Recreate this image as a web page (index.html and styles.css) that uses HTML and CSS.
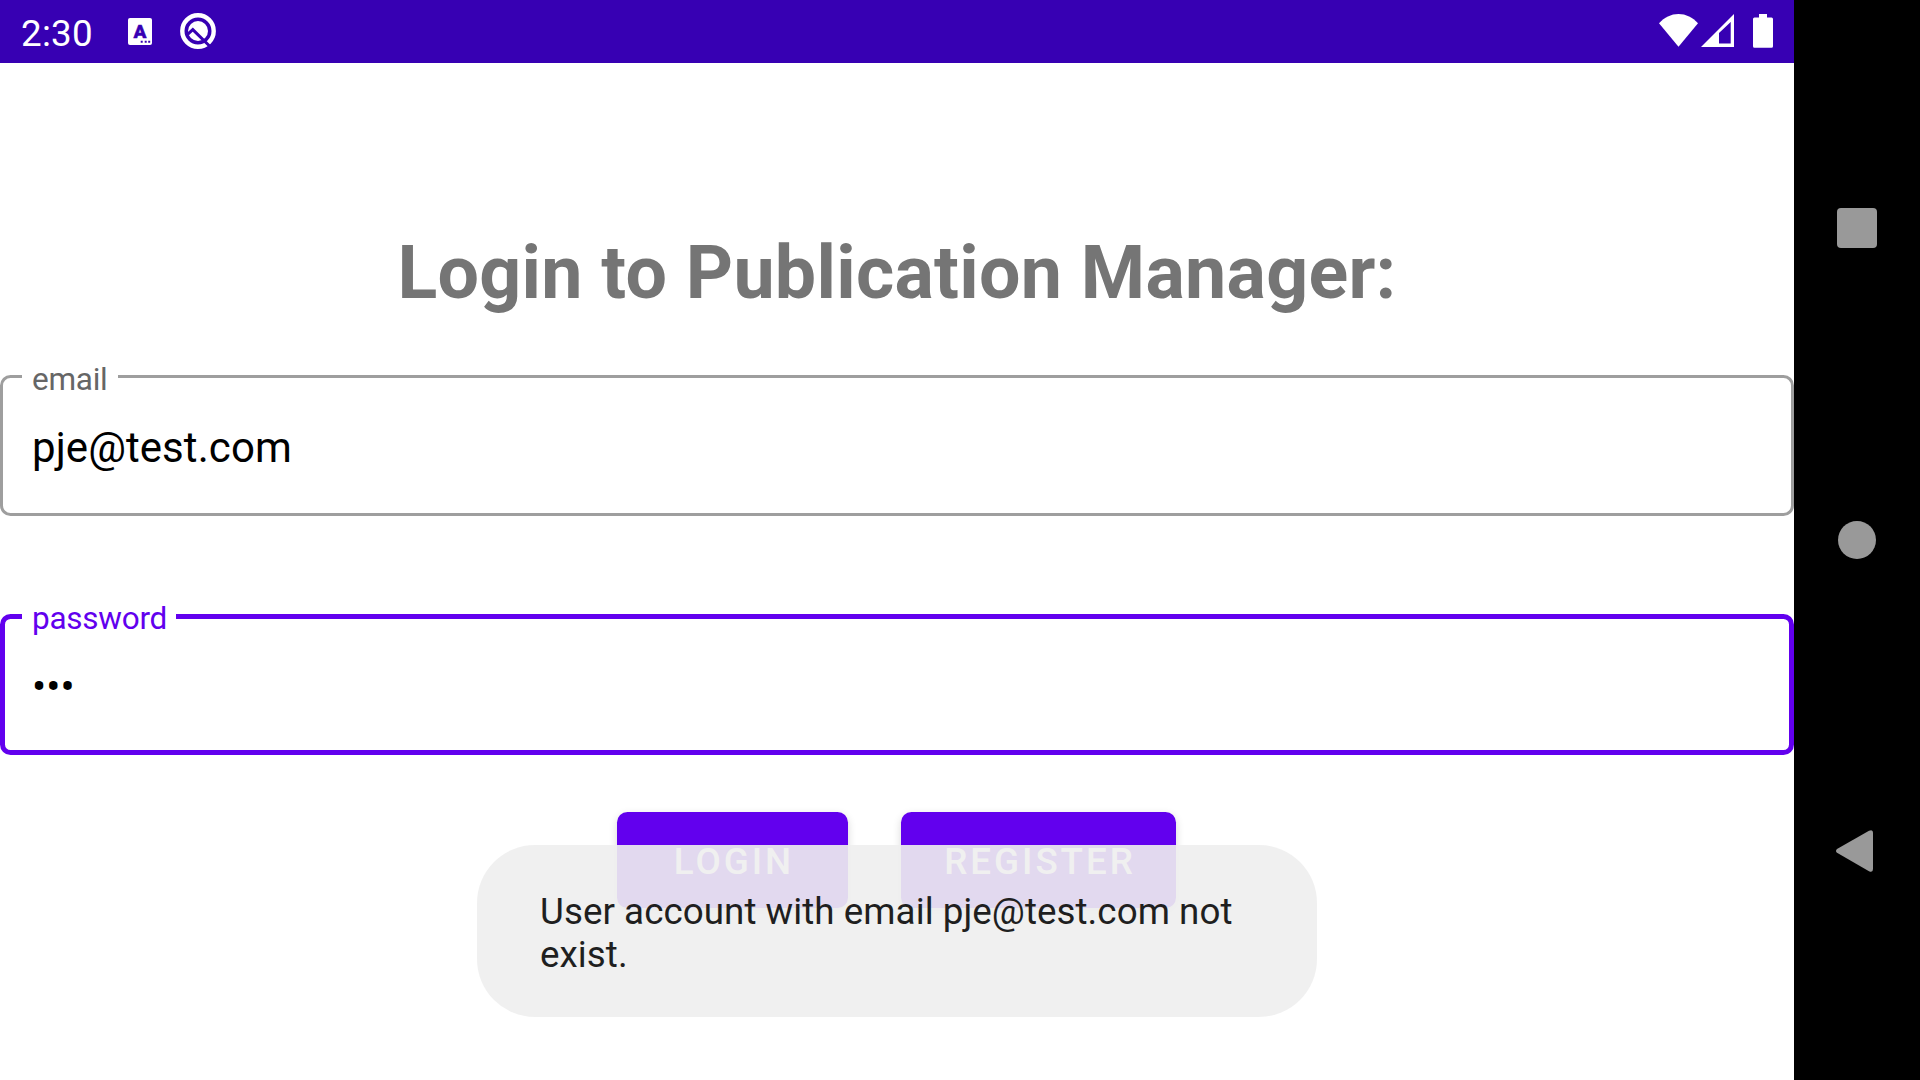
FILE: index.html
```html
<!DOCTYPE html>
<html lang="en">
<head>
<meta charset="utf-8">
<title>Publication Manager</title>
<link rel="stylesheet" href="styles.css">
</head>
<body>
<div class="app">
  <header class="status">
    <span class="clock">2:30</span>
    <svg class="ico-lang" width="24" height="27" viewBox="0 0 24 27">
      <rect width="24" height="27" rx="2" fill="#fff"/>
      <text class="lang-letter" x="12" y="19.5" text-anchor="middle">A</text>
      <path d="M12.7 23.700h2M16.700 23.700h2M20.200 23.700h2" stroke="#3700b3" stroke-width="2"/>
    </svg>
    <svg class="ico-ring" width="36" height="36" viewBox="0 0 36 36">
      <circle cx="18" cy="18" r="15.700" fill="none" stroke="#fff" stroke-width="4.400"/>
      <circle cx="18" cy="18" r="10" fill="#fff"/>
      <path d="M7 21.800L12.800 16.600L29.500 33" fill="none" stroke="#3700b3" stroke-width="3"/>
    </svg>
    <svg class="ico-wifi" width="39" height="33" viewBox="0 0 39 33">
      <path d="M19.5 32.7L0 9.2C5.4 3.400 12 0 19.500 0S33.600 3.400 39 9.200Z" fill="#fff"/>
    </svg>
    <svg class="ico-signal" width="33" height="33" viewBox="0 0 33 33">
      <path fill-rule="evenodd" d="M0 33L33 0V33ZM18 19V29.500H29.700V8Z" fill="#fff"/>
    </svg>
    <svg class="ico-battery" width="20" height="34" viewBox="0 0 20 34">
      <path d="M6 0H14V3.500H18.500Q20 3.500 20 5V32.300Q20 33.800 18.500 33.800H1.500Q0 33.800 0 32.300V5Q0 3.500 1.500 3.500H6Z" fill="#fff"/>
    </svg>
  </header>
  <main class="login">
    <h1 class="title">Login to Publication Manager:</h1>
    <div class="field">
      <span class="label">email</span>
      <span class="value">pje@test.com</span>
    </div>
    <div class="field focused">
      <span class="label">password</span>
      <span class="value">•••</span>
    </div>
    <div class="actions">
      <button class="btn btn-login">LOGIN</button>
      <button class="btn btn-register">REGISTER</button>
    </div>
  </main>
  <div class="toast">User account with email pje@test.com not exist.</div>
</div>
<nav class="nav">
  <div class="nav-item"><svg width="40" height="40" viewBox="0 0 40 40"><rect width="40" height="40" rx="4" fill="#999"/></svg></div>
  <div class="nav-item"><svg width="40" height="40" viewBox="0 0 40 40"><circle cx="20" cy="20" r="19" fill="#999"/></svg></div>
  <div class="nav-item"><svg width="42" height="44" viewBox="0 0 42 44"><path d="M1 19L33 .8Q37 -1 37 2.800V39Q37 43 33 41.200L1 22.800Q-1 20.900 1 19Z" fill="#999"/></svg></div>
</nav>
</body>
</html>
```
FILE: styles.css
```css
* { box-sizing: border-box; }

body {
  margin: 0;
  width: 1920px;
  height: 1080px;
  display: flex;
  overflow: hidden;
  background: #fff;
  font-family: Roboto, sans-serif;
}

.app {
  position: relative;
  width: 1794px;
  height: 1080px;
}

/* Status bar */
.status {
  display: flex;
  align-items: flex-start;
  height: 63px;
  padding-left: 21px;
  padding-right: 21px;
  background: #3700b3;
}

.clock {
  width: 107px;
  padding-top: 2px;
  color: #fff;
  font-size: 36.75px;
  line-height: 63px;
  letter-spacing: .25px;
}

.ico-lang { margin-top: 18px; }

.lang-letter {
  font-size: 19px;
  font-weight: 900;
  fill: #3700b3;
  stroke: #3700b3;
  stroke-width: .4px;
}

.ico-ring { margin: 13px 0 0 28px; }
.ico-wifi { margin: 14px 0 0 auto; }
.ico-signal { margin: 14px 0 0 3px; }
.ico-battery { margin: 14px 0 0 19px; }

/* Login form */
.title {
  margin: 160px 0 52px;
  color: #757575;
  font-size: 73.5px;
  font-weight: 700;
  line-height: 100px;
  letter-spacing: .28px;
  text-align: center;
}

.field {
  position: relative;
  height: 141px;
  margin-bottom: 98px;
  padding: 45px 29px 0;
  border: 3px solid #9e9e9e;
  border-radius: 10.5px;
}

.label {
  position: absolute;
  top: -16px;
  left: 19px;
  width: 96px;
  padding-left: 10px;
  background: #fff;
  color: #666;
  font-size: 31.5px;
  line-height: 36px;
  letter-spacing: -.25px;
}

.value {
  display: block;
  color: #000;
  font-size: 42px;
  line-height: 50px;
  letter-spacing: .08px;
}

.focused {
  margin-bottom: 57px;
  padding: 43px 27px 0;
  border: 5px solid #6200ee;
}

.focused .label {
  top: -18px;
  left: 17px;
  width: 154px;
  color: #6200ee;
}

.actions {
  display: flex;
  gap: 53px;
  padding-left: 617px;
}

.btn {
  height: 96px;
  padding: 2px 0 0 3px;
  border: 0;
  border-radius: 10.5px;
  background: #6200ee;
  box-shadow: 0 3px 8px rgba(0, 0, 0, .16);
  color: #fff;
  font-family: inherit;
  font-size: 36.75px;
  font-weight: 500;
  letter-spacing: 2.95px;
}

.btn-login { width: 231px; }
.btn-register { width: 275px; }

.toast {
  position: absolute;
  top: 845px;
  left: 477px;
  width: 840px;
  height: 172px;
  padding: 45px 63px 0;
  border-radius: 58px;
  background: rgba(238, 238, 238, .91);
  color: #1f1f1f;
  font-size: 36.75px;
  line-height: 43px;
  letter-spacing: .05px;
}

/* Navigation bar */
.nav {
  display: flex;
  flex-direction: column;
  width: 126px;
  padding: 72.5px 0;
  background: #000;
}

.nav-item {
  flex: 1;
  display: flex;
  align-items: center;
  justify-content: center;
}
```
